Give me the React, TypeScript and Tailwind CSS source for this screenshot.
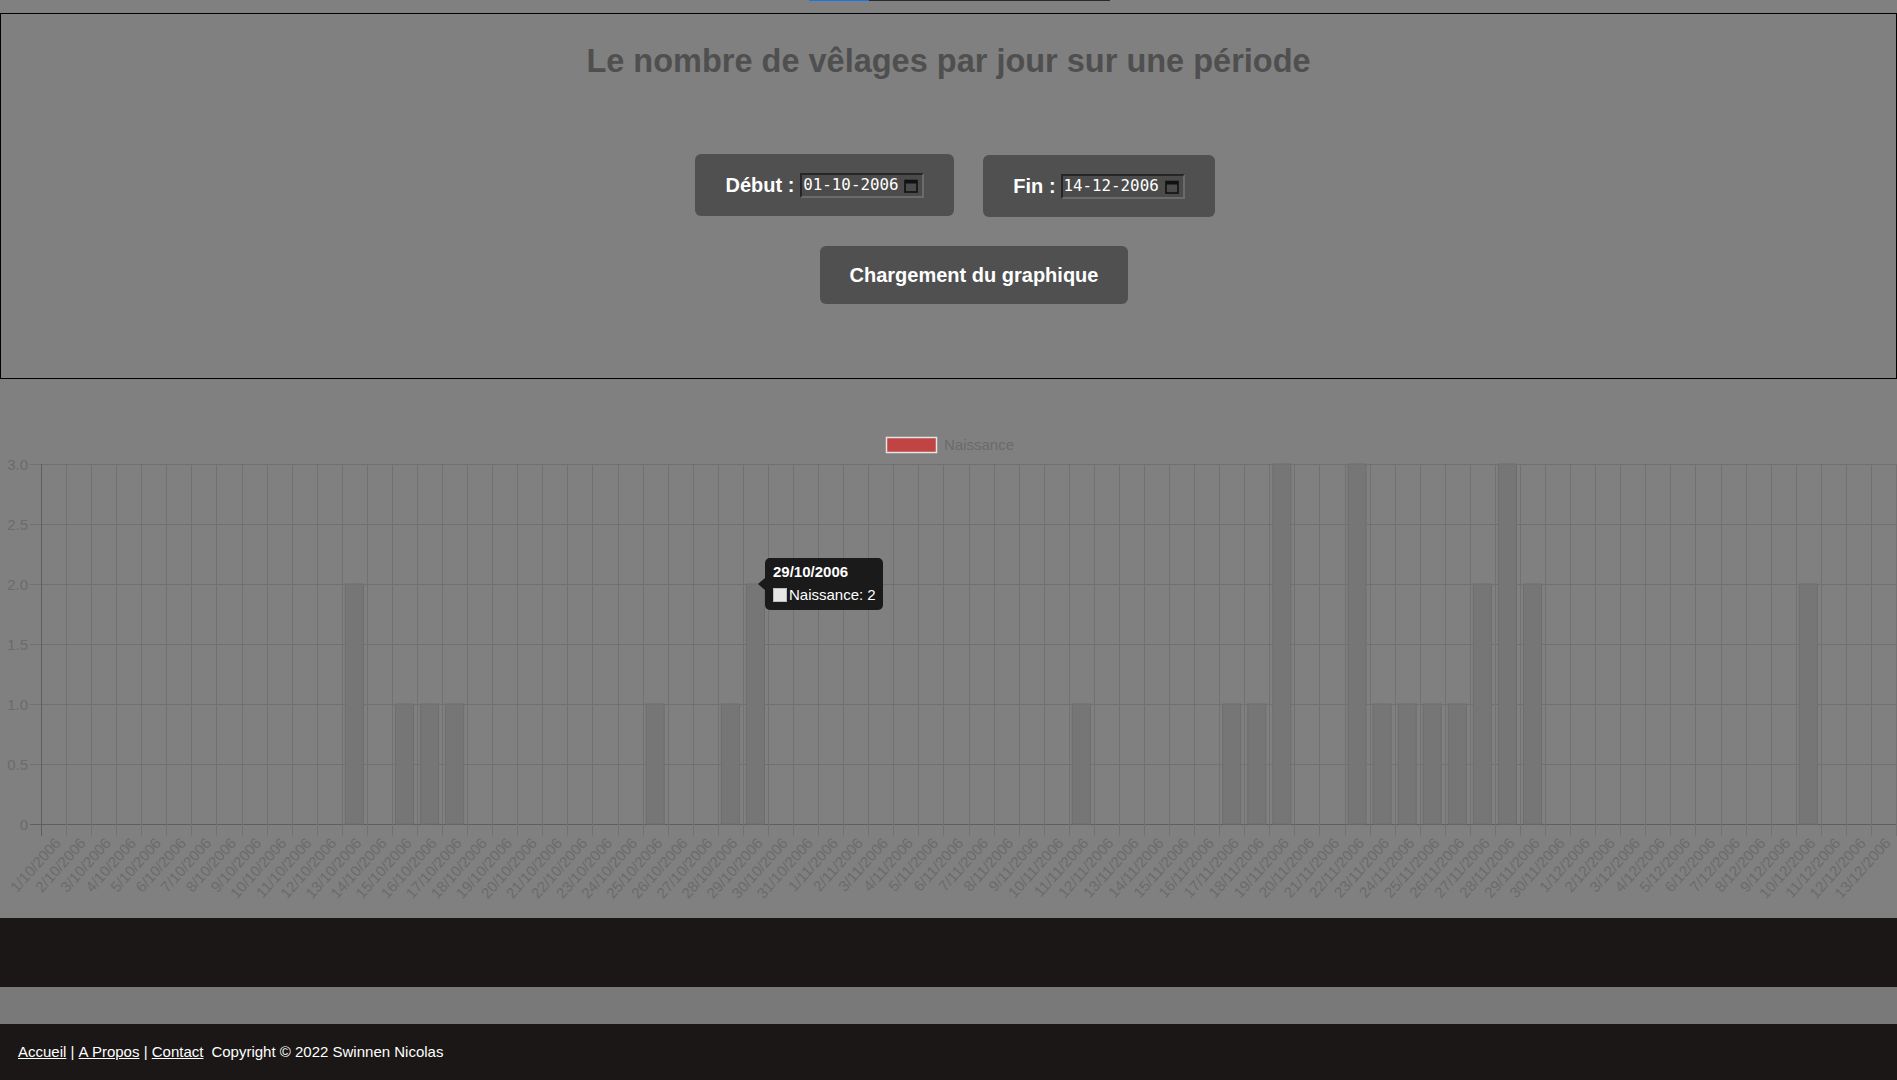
import React from 'react';

const values: Record<number, number> = {
  12: 2, 14: 1, 15: 1, 16: 1, 24: 1, 27: 1, 28: 2, 41: 1, 47: 1, 48: 1, 49: 3,
  52: 3, 53: 1, 54: 1, 55: 1, 56: 1, 57: 2, 58: 3, 59: 2, 70: 2,
};

// 1/10/2006 .. 13/12/2006
const labels: string[] = Array.from({ length: 74 }, (_, i) => {
  const d = new Date(2006, 9, 1 + i);
  return `${d.getDate()}/${d.getMonth() + 1}/2006`;
});

const LEFT = 41;
const RIGHT = 1896;
const TOP = 85; // 3.0 line, relative to chart container
const ZERO = 445; // 0 line
const CW = (RIGHT - LEFT) / labels.length;

function CalendarIcon() {
  return (
    <svg width="14" height="15" viewBox="0 0 14 15" className="shrink-0">
      <rect x="1" y="2.5" width="12" height="11.5" fill="none" stroke="#111" strokeWidth="1.6" />
      <rect x="1" y="2.5" width="12" height="3" fill="#111" />
    </svg>
  );
}

function DateField({ value }: { value: string }) {
  return (
    <div className="flex items-center w-[124px] h-[25px] bg-[#4b4b4b] border-2 border-t-[#262626] border-l-[#262626] border-r-[#6b6b6b] border-b-[#6b6b6b] pl-px pr-[4px]">
      <span className="flex-1 text-white text-[15.8px] leading-none font-['DejaVu_Sans_Mono',monospace]">
        {value}
      </span>
      <CalendarIcon />
    </div>
  );
}

function Chart() {
  const yTicks = [3, 2.5, 2, 1.5, 1, 0.5, 0];
  return (
    <div className="relative h-[539px]">
      <svg width="1897" height="539" viewBox="0 0 1897 539" className="block">
        {/* legend */}
        <rect x="886.5" y="58.5" width="50" height="15" fill="#c14444" stroke="#e4e4e4" strokeWidth="1.5" />
        <text x="944" y="71" fontSize="15" fill="#6b6b6b" fontFamily="Liberation Sans, Arial, sans-serif">
          Naissance
        </text>

        {/* horizontal grid */}
        {yTicks.map((t) => {
          const y = ZERO - t * 120 + 0.5;
          return (
            <g key={t}>
              <line x1={30} x2={RIGHT} y1={y} y2={y} stroke={t === 0 ? '#5e5e5e' : '#717171'} strokeWidth="1" />
              <text
                x={28}
                y={y}
                fontSize="15"
                textAnchor="end"
                dominantBaseline="central"
                fill="#6b6b6b"
                fontFamily="Liberation Sans, Arial, sans-serif"
              >
                {t === 0 ? '0' : t.toFixed(1)}
              </text>
            </g>
          );
        })}

        {/* vertical grid */}
        {labels.map((_, i) => {
          const x = Math.round(LEFT + (i + 1) * CW) + 0.5;
          return <line key={i} x1={x} x2={x} y1={TOP} y2={ZERO + 12} stroke="#717171" strokeWidth="1" />;
        })}
        <line x1={LEFT + 0.5} x2={LEFT + 0.5} y1={TOP} y2={ZERO + 12} stroke="#5e5e5e" strokeWidth="1" />

        {/* bars */}
        {Object.entries(values).map(([k, v]) => {
          const i = Number(k);
          const bw = CW * 0.72;
          const x = LEFT + i * CW + (CW - bw) / 2;
          const h = v * 120;
          return (
            <rect
              key={k}
              x={x}
              y={ZERO - h}
              width={bw}
              height={h}
              fill="#767676"
              stroke="#6e6e6e"
              strokeWidth="1"
            />
          );
        })}

        {/* x labels */}
        {labels.map((l, i) => {
          const cx = LEFT + (i + 0.5) * CW;
          return (
            <text
              key={l}
              transform={`translate(${cx + 4} ${ZERO + 16}) rotate(-48)`}
              fontSize="15"
              textAnchor="end"
              dominantBaseline="central"
              fill="#6b6b6b"
              fontFamily="Liberation Sans, Arial, sans-serif"
            >
              {l}
            </text>
          );
        })}
      </svg>

      {/* tooltip */}
      <div className="absolute left-[765px] top-[179px] w-[118px] h-[52px] rounded-[5px] bg-[#1a1a1a] pl-[8px] pt-[5px] text-white text-[15px] leading-[18px]">
        <div className="absolute -left-[7px] top-[20px] w-0 h-0 border-y-[6px] border-y-transparent border-r-[7px] border-r-[#1a1a1a]" />
        <div className="font-bold">29/10/2006</div>
        <div className="flex items-center gap-[2px] mt-[5px]">
          <span className="w-[14px] h-[14px] bg-[#e6e6e6] border border-[#bdbdbd]" />
          <span>Naissance: 2</span>
        </div>
      </div>
    </div>
  );
}

export default function App() {
  return (
    <div className="min-h-screen bg-[#808080] font-['Liberation_Sans',Arial,sans-serif]">
      <div className="flex h-px pl-[809px]">
        <div className="w-[60px] bg-[#1a73e8]" />
        <div className="w-[241px] bg-[#2a2a2a]" />
      </div>

      <div className="mt-[12px] h-[366px] border border-black">
        <h1 className="mt-[29px] text-center text-[32.5px] leading-[37px] font-bold text-[#4f4f4f]">
          Le nombre de vêlages par jour sur une période
        </h1>

        <div className="mt-[74px] flex justify-center gap-[29px] pl-[13px]">
          <div className="flex items-center gap-[6px] h-[62px] px-[30px] rounded-[6px] bg-[#505050]">
            <span className="text-white font-bold text-[20px]">Début :</span>
            <DateField value="01-10-2006" />
          </div>
          <div className="flex items-center gap-[5px] h-[62px] px-[30px] rounded-[6px] bg-[#505050] mt-px">
            <span className="text-white font-bold text-[20px]">Fin :</span>
            <DateField value="14-12-2006" />
          </div>
        </div>

        <div className="mt-[29px] flex justify-center pl-[51px]">
          <button className="h-[58px] px-[30px] rounded-[6px] bg-[#505050] text-white font-bold text-[20px]">
            Chargement du graphique
          </button>
        </div>
      </div>

      <Chart />

      <div className="h-[69px] bg-[#1a1716]" />
      <div className="h-[37px] bg-[#797979]" />

      <footer className="h-[56px] bg-[#1a1716] flex items-center pl-[18px] text-[15px] text-white">
        <a href="#" className="underline">Accueil</a>
        <span className="whitespace-pre"> | </span>
        <a href="#" className="underline">A Propos</a>
        <span className="whitespace-pre"> | </span>
        <a href="#" className="underline">Contact</a>
        <span className="ml-[8px]">Copyright © 2022 Swinnen Nicolas</span>
      </footer>
    </div>
  );
}
